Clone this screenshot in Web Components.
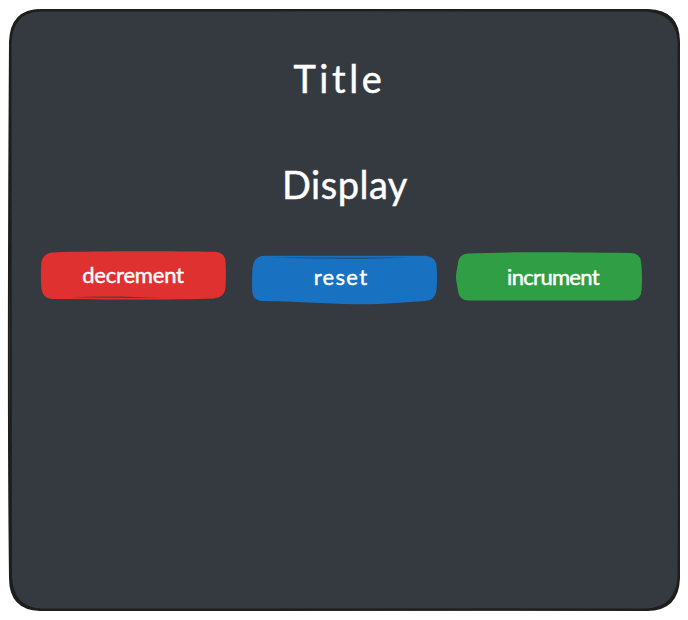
<!DOCTYPE html>
<html lang="en">
<head>
<meta charset="utf-8">
<title>Counter</title>
<style>
html, body { margin: 0; background: #fff; }
body { width: 688px; height: 620px; overflow: hidden; }
</style>
</head>
<body>
<counter-panel>
  <sketch-heading style="--size:38px;--spacing:3.6px;--shift:-4px">Title</sketch-heading>
  <sketch-heading style="--size:38px;--spacing:.5px;--shift:7px">Display</sketch-heading>
  <sketch-button slot="actions" tone="decrement">decrement</sketch-button>
  <sketch-button slot="actions" tone="reset">reset</sketch-button>
  <sketch-button slot="actions" tone="increment">incrument</sketch-button>
</counter-panel>
<script>
class CounterPanel extends HTMLElement {
  constructor() {
    super();
    this.attachShadow({ mode: 'open' }).innerHTML = `
      <style>
        :host { display: block; position: relative; width: 688px; height: 620px; box-sizing: border-box; padding: 53px 46px 0 41px; }
        svg { position: absolute; inset: 0; }
        main { position: relative; }
        .headings { display: grid; grid-template-rows: 50px 50px; row-gap: 56px; justify-items: center; }
        .actions { display: grid; grid-template-columns: 211px 204px 186px; margin-top: 40px; }
      </style>
      <svg width="688" height="620" viewBox="0 0 688 620" aria-hidden="true">
        <path fill="#343a40" d="M42 10 H648 Q679 10 679 42 V578 Q679 610 647 610 H42 Q10 610 10 578 V42 Q10 10 42 10Z"/>
        <g fill="none" stroke="#1e1e1e">
          <path stroke-width="2" d="M41 10 C220 9.7 480 10.2 648 10 Q679 11 679 42 C678.5 210 678.5 410 679 578 Q678 610 647 610 C440 609.5 220 610.5 40 610 Q10 609 10 578 C8.2 430 8.7 250 10 42 Q11 10 41 10Z"/>
          <path stroke-width="2" d="M38 10.5 C250 10.8 430 9.7 646 10.5 Q676 12.5 678.6 41 C679.7 250 679.8 410 678.5 577 Q676.5 608 646 609.5 C430 610.3 240 609.4 41 609.5 Q12.5 608 11 577 C10.7 390 10.6 220 10.5 43 Q12.5 12 38 10.5Z"/>
        </g>
      </svg>
      <main>
        <div class="headings"><slot></slot></div>
        <div class="actions"><slot name="actions"></slot></div>
      </main>`;
  }
}
customElements.define('counter-panel', CounterPanel);

class SketchHeading extends HTMLElement {
  constructor() {
    super();
    this.attachShadow({ mode: 'open' }).innerHTML = `
      <style>
        :host { display: block; padding-left: max(0px, var(--shift)); padding-right: max(0px, calc(0px - var(--shift)));
          font: 400 var(--size)/50px Virgil, Excalifont, Lato, sans-serif; letter-spacing: var(--spacing); color: #fff; white-space: nowrap;
          -webkit-text-stroke: .45px #fff; font-variant-ligatures: none; }
      </style><slot></slot>`;
  }
}
customElements.define('sketch-heading', SketchHeading);

const shapes = {
  decrement: {
    color: '#e03131', dark: '#4c3638', pad: '2px 2px 0 0', size: '22px', spacing: '-.2px',
    body: 'M12 1.4 C60 -.2 130 .1 174 .8 Q184.5 1.5 184.6 12 C185 23 184.9 30 184.5 37 Q183.6 46.5 173 47.5 C125 49.3 55 48.3 11 48 Q1 47 .4 37 C-.4 27 -.2 19 .3 12 Q2 2 12 1.4Z',
    line: 'M28 46.3 C60 44.6 91 45.6 121 46.6 C90 47.2 62 46.8 28 46.3Z'
  },
  reset: {
    color: '#1971c2', dark: '#2c4157', pad: '6px 8px 0 0', size: '22px', spacing: '1.3px',
    body: 'M12 4.8 H174 Q184.5 6 184.6 16 C185.4 25 185.2 33 184.2 41 Q182 49.8 173 50 C152 51 132 53.6 105 53.3 C70 53 42 50.2 11 50.1 Q1 49.5 .4 41 C-.3 33 .1 26 .5 17 Q2 5 12 4.8Z',
    line: 'M20 6.3 C64 7 118 6.3 158 6.4 C117 8 64 8.4 20 6.3Z'
  },
  increment: {
    color: '#2f9e44', dark: '#2f9e44', pad: '6px 0 0 8px', size: '22px', spacing: '-.7px',
    body: 'M12 2.6 C50 .9 91 1.2 175 2.1 Q185 2.5 185.3 13 C186.2 23 186.2 30 185.6 39 Q185 49.3 175 49.6 H12 Q3 49 2 40 C1 33 -.8 27 .3 22 L2 12 Q3 3 12 2.6Z',
    line: ''
  }
};

class SketchButton extends HTMLElement {
  connectedCallback() {
    if (this.shadowRoot) return;
    const s = shapes[this.getAttribute('tone')];
    this.attachShadow({ mode: 'open' }).innerHTML = `
      <style>
        :host { display: block; position: relative; width: 186px; height: 55px; }
        svg { position: absolute; left: 0; top: 2px; overflow: visible; }
        button { position: relative; display: flex; align-items: center; justify-content: center; width: 186px; height: 50px;
          box-sizing: border-box; border: 0; background: none; padding: ${s.pad}; color: #fff;
          font: 400 ${s.size}/28px Virgil, Excalifont, Lato, sans-serif; letter-spacing: ${s.spacing}; -webkit-text-stroke: .45px #fff; }
      </style>
      <svg width="186" height="55" viewBox="0 0 186 55" aria-hidden="true">
        <path fill="${s.color}" d="${s.body}"/>
        <path fill="${s.dark}" opacity=".85" d="${s.line}"/>
      </svg>
      <button type="button"><span><slot></slot></span></button>`;
  }
}
customElements.define('sketch-button', SketchButton);
</script>
</body>
</html>
